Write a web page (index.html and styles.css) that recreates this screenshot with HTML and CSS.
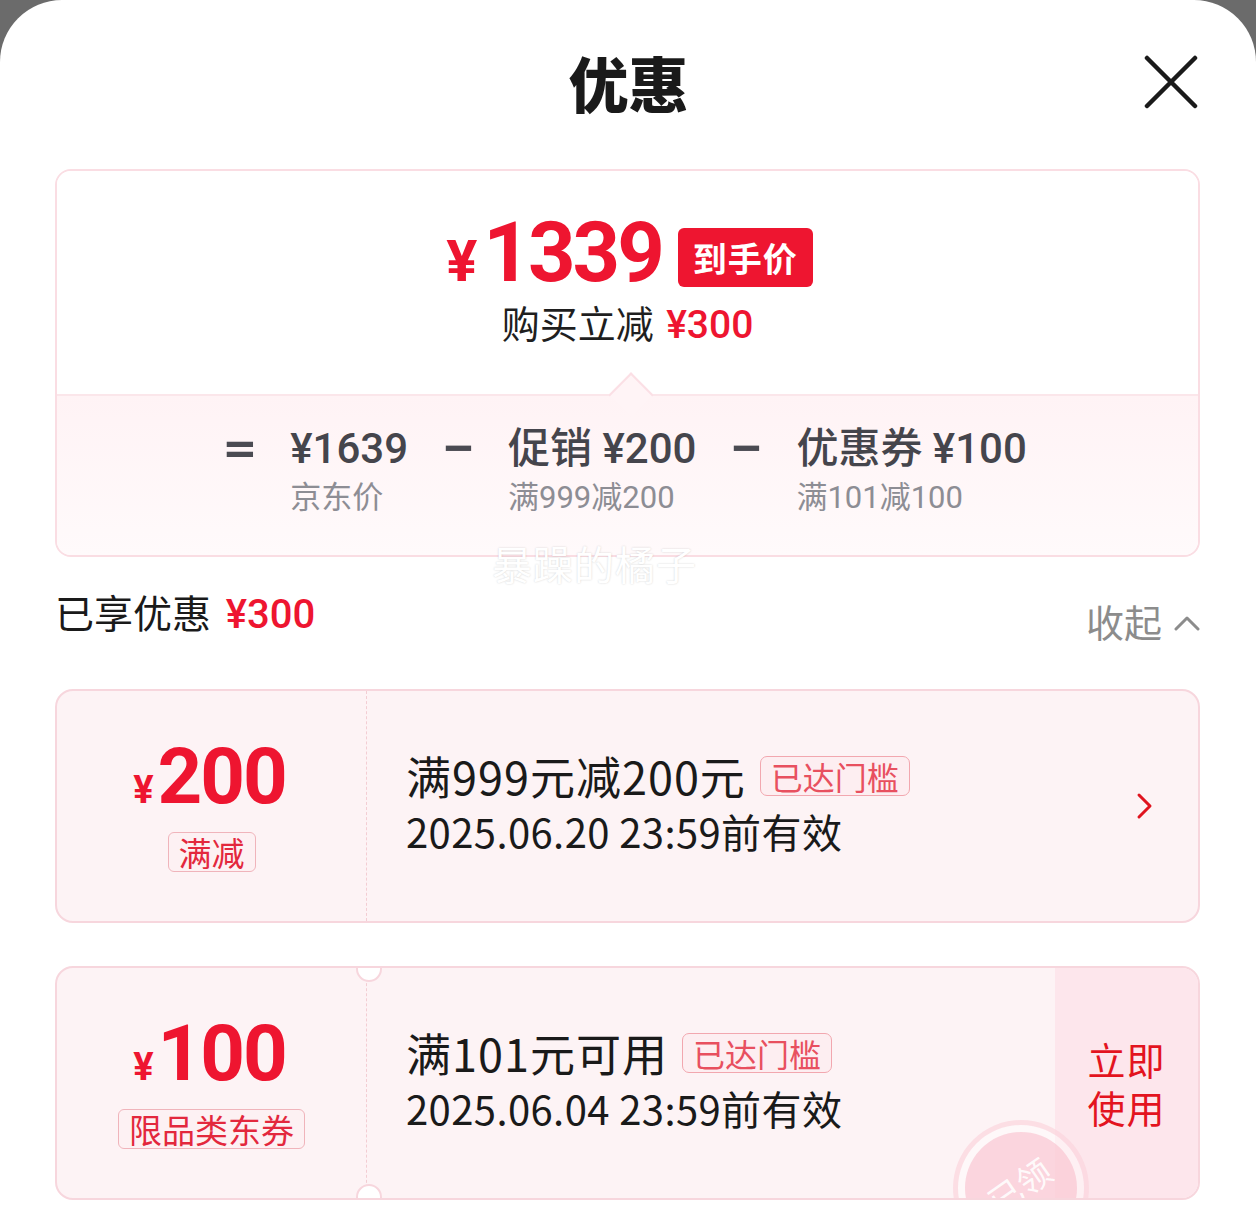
FILE: index.html
```html
<!DOCTYPE html>
<html lang="zh-CN">
<head>
<meta charset="utf-8">
<title>优惠</title>
<link rel="stylesheet" href="styles.css">
</head>
<body>
<div class="sheet">
  <header class="header">
    <span></span>
    <h1 class="title">优惠</h1>
    <button class="close" aria-label="关闭">
      <svg width="54" height="54" viewBox="0 0 54 54"><path d="M3 3 L51 51 M51 3 L3 51" stroke="#1a1a1a" stroke-width="4.5" stroke-linecap="round" fill="none"/></svg>
    </button>
  </header>

  <section class="summary">
    <div class="summary-top">
      <div class="price-row">
        <span class="final"><span class="final-yen">¥</span>1339</span>
        <span class="badge">到手价</span>
      </div>
      <div class="subline">购买立减 <span class="red">¥300</span></div>
    </div>
    <div class="summary-bottom">
      <span class="op">=</span>
      <div class="part">
        <div class="part-main">¥1639</div>
        <div class="part-sub">京东价</div>
      </div>
      <span class="op">−</span>
      <div class="part">
        <div class="part-main">促销 ¥200</div>
        <div class="part-sub">满999减200</div>
      </div>
      <span class="op">−</span>
      <div class="part">
        <div class="part-main">优惠券 ¥100</div>
        <div class="part-sub">满101减100</div>
      </div>
    </div>
    <div class="watermark">暴躁的橘子</div>
  </section>

  <div class="enjoyed">
    <div class="enjoyed-left">已享优惠 <span class="red">¥300</span></div>
    <div class="collapse">收起
      <svg width="26" height="16" viewBox="0 0 26 16"><path d="M2 14 L13 3 L24 14" stroke="#8c8c8c" stroke-width="3" fill="none" stroke-linecap="round" stroke-linejoin="round"/></svg>
    </div>
  </div>

  <div class="coupon">
    <div class="c-left">
      <div class="c-amount"><span class="c-yen">¥</span>200</div>
      <span class="c-tag">满减</span>
    </div>
    <div class="c-right">
      <div class="c-info">
        <div class="c-title">满999元减200元 <span class="reached">已达门槛</span></div>
        <div class="c-date">2025.06.20 23:59前有效</div>
      </div>
      <svg class="c-arrow" width="18" height="28" viewBox="0 0 18 28"><path d="M3 3 L14 14 L3 25" stroke="#e0141f" stroke-width="3" fill="none" stroke-linecap="round" stroke-linejoin="round"/></svg>
    </div>
  </div>

  <div class="coupon coupon-notched">
    <div class="c-left">
      <div class="c-amount"><span class="c-yen">¥</span>100</div>
      <span class="c-tag">限品类东券</span>
    </div>
    <div class="c-right">
      <div class="c-info">
        <div class="c-title">满101元可用 <span class="reached">已达门槛</span></div>
        <div class="c-date">2025.06.04 23:59前有效</div>
      </div>
    </div>
    <div class="c-action">立即<br>使用</div>
    <div class="stamp"><span>已领</span></div>
  </div>
</div>
</body>
</html>
```

FILE: styles.css
```css
* { box-sizing: border-box; }
html, body { margin: 0; padding: 0; }
body {
  background: #6b6b6b;
  font-family: Roboto, "Noto Sans CJK SC", sans-serif;
  color: #1a1a1a;
  width: 1256px;
  height: 1218px;
  overflow: hidden;
}
.sheet {
  background: #fff;
  border-radius: 62px 62px 0 0;
  min-height: 1218px;
  padding: 0 56px 0 55px;
}
.red { color: #ee1530; }

.header {
  height: 164px;
  margin-bottom: 5px;
  display: grid;
  grid-template-columns: 1fr auto 1fr;
  align-items: center;
}
.title {
  margin: 0;
  font-family: "Noto Sans CJK SC", sans-serif;
  font-size: 60px;
  font-weight: 900;
  line-height: 1;
  color: #1a1a1a;
  transform: translateX(1px);
}
.close {
  justify-self: end;
  margin-right: 2px;
  background: none;
  border: 0;
  padding: 0;
  width: 54px;
  height: 54px;
  display: flex;
}

.summary {
  position: relative;
  border: 2px solid #fadde3;
  border-radius: 16px;
}
.summary-top {
  height: 223px;
  padding-top: 44px;
  display: flex;
  flex-direction: column;
  align-items: center;
  border-radius: 14px 14px 0 0;
  background: #fff;
}
.price-row {
  height: 84px;
  display: flex;
  align-items: center;
  gap: 16px;
  margin-left: 4px;
}
.final {
  font-family: Roboto, sans-serif;
  font-weight: 700;
  font-size: 83px;
  line-height: 84px;
  color: #ee1530;
  letter-spacing: -3px;
  display: flex;
  align-items: baseline;
}
.final-yen {
  font-size: 58px;
  margin-right: 6px;
  letter-spacing: 0;
}
.badge {
  background: #ee1530;
  color: #fff;
  font-family: "Noto Sans CJK SC", sans-serif;
  font-weight: 700;
  font-size: 34px;
  line-height: 59px;
  height: 59px;
  padding: 0 15px;
  border-radius: 6px;
  letter-spacing: 1px;
}
.subline {
  margin-top: 1px;
  font-size: 38px;
  line-height: 44px;
  color: #1f1f1f;
  font-family: "Noto Sans CJK SC", sans-serif;
}
.subline .red {
  font-family: Roboto, sans-serif;
  font-weight: 500;
  font-size: 39px;
  margin-left: 4px;
}

.summary-bottom {
  position: relative;
  height: 161px;
  border-top: 2px solid #fbe6ea;
  border-radius: 0 0 14px 14px;
  background: linear-gradient(#fff3f5, #fffafb);
  display: flex;
  justify-content: center;
  align-items: flex-start;
  gap: 36px;
  padding-top: 26px;
  padding-right: 2px;
}
.summary-bottom::before {
  content: "";
  position: absolute;
  left: 50%;
  top: -17px;
  width: 30px;
  height: 30px;
  margin-left: -13px;
  background: #fff4f6;
  border-left: 2px solid #fbdfe5;
  border-top: 2px solid #fbdfe5;
  transform: rotate(45deg);
}
.op {
  width: 28px;
  text-align: center;
  font-size: 48px;
  font-weight: 700;
  color: #4b4b52;
  line-height: 54px;
  transform: scaleX(1.25);
}
.part-main {
  font-size: 42px;
  line-height: 54px;
  color: #45454c;
  font-weight: 500;
  white-space: nowrap;
}
.part-sub {
  font-size: 31px;
  line-height: 40px;
  color: #8d8d94;
  white-space: nowrap;
  margin-top: 2px;
}

.watermark {
  position: absolute;
  left: 435px;
  top: 363px;
  font-family: "Noto Sans CJK SC", sans-serif;
  font-size: 40px;
  color: #fff;
  text-shadow: 0 0 2px rgba(0,0,0,0.18);
  letter-spacing: 1px;
  pointer-events: none;
  z-index: 2;
}

.enjoyed {
  margin-top: 30px;
  height: 52px;
  display: flex;
  justify-content: space-between;
  align-items: flex-start;
}
.enjoyed-left {
  font-family: "Noto Sans CJK SC", sans-serif;
  font-size: 39px;
  line-height: 48px;
  color: #1a1a1a;
}
.enjoyed-left .red {
  font-family: Roboto, sans-serif;
  font-weight: 500;
  font-size: 40px;
  margin-left: 6px;
}
.collapse {
  margin-top: 10px;
  font-family: "Noto Sans CJK SC", sans-serif;
  font-size: 38px;
  line-height: 48px;
  color: #8c8c8c;
  display: flex;
  align-items: center;
  gap: 12px;
}
.collapse svg { margin-top: 4px; }

.coupon {
  position: relative;
  margin-top: 50px;
  height: 234px;
  border: 2px solid #f7d6dd;
  border-radius: 18px;
  background: #fdf3f5;
  display: flex;
  overflow: hidden;
}
.coupon-notched { margin-top: 43px; }
.c-left {
  width: 309px;
  flex: none;
  display: flex;
  flex-direction: column;
  align-items: center;
  justify-content: center;
  padding-bottom: 2px;
}
.c-amount {
  font-family: Roboto, sans-serif;
  font-weight: 700;
  font-size: 78px;
  line-height: 76px;
  color: #ee1530;
  letter-spacing: -2px;
  display: flex;
  align-items: baseline;
  margin-left: -4px;
}
.c-yen {
  font-size: 38px;
  margin-right: 4px;
  letter-spacing: 0;
}
.c-tag {
  margin-top: 4px;
  border: 1.5px solid #f0b4bb;
  border-radius: 6px;
  background: #fdf1f3;
  color: #e3283d;
  font-family: "Noto Sans CJK SC", sans-serif;
  font-size: 33px;
  line-height: 38px;
  padding: 0 10px;
}
.c-right {
  flex: 1;
  border-left: 1.5px dashed #f3cdd3;
  display: flex;
  align-items: center;
  padding-left: 39px;
  padding-right: 44px;
  padding-bottom: 6px;
}
.c-info { flex: 1; }
.c-title {
  font-family: "Noto Sans CJK SC", sans-serif;
  font-size: 45px;
  line-height: 56px;
  letter-spacing: 1px;
  color: #1a1a1a;
  display: flex;
  align-items: center;
  gap: 14px;
}
.reached {
  border: 1.5px solid #f2a7af;
  border-radius: 7px;
  background: #fdeef1;
  color: #e8505f;
  font-size: 32px;
  line-height: 38px;
  padding: 0 10px;
  letter-spacing: 0;
}
.c-date {
  font-family: "Noto Sans CJK SC", sans-serif;
  font-size: 40px;
  line-height: 54px;
  letter-spacing: 0.4px;
  color: #1a1a1a;
}
.c-arrow { flex: none; margin-top: 6px; }

.coupon-notched::before,
.coupon-notched::after {
  content: "";
  position: absolute;
  left: 299px;
  width: 22px;
  height: 22px;
  border-radius: 50%;
  background: #fff;
  border: 2px solid #f7d6dd;
  z-index: 3;
}
.coupon-notched::before { top: -12px; }
.coupon-notched::after { bottom: -12px; }

.c-action {
  width: 143px;
  flex: none;
  background: #fde6ec;
  color: #e3141f;
  font-family: "Noto Sans CJK SC", sans-serif;
  font-size: 38px;
  line-height: 48px;
  display: flex;
  align-items: center;
  justify-content: center;
  text-align: center;
  letter-spacing: 1px;
}
.stamp {
  position: absolute;
  left: 896px;
  top: 152px;
  width: 136px;
  height: 136px;
  border-radius: 50%;
  border: 5px solid rgba(250, 200, 212, 0.55);
  background: rgba(255,255,255,0.4);
  display: flex;
  align-items: center;
  justify-content: center;
}
.stamp span {
  width: 112px;
  height: 112px;
  border-radius: 50%;
  background: rgba(249, 190, 204, 0.6);
  color: rgba(255,255,255,0.9);
  font-family: "Noto Sans CJK SC", sans-serif;
  font-size: 34px;
  display: flex;
  align-items: center;
  justify-content: center;
  transform: rotate(-35deg);
  padding-bottom: 8px;
}
```
